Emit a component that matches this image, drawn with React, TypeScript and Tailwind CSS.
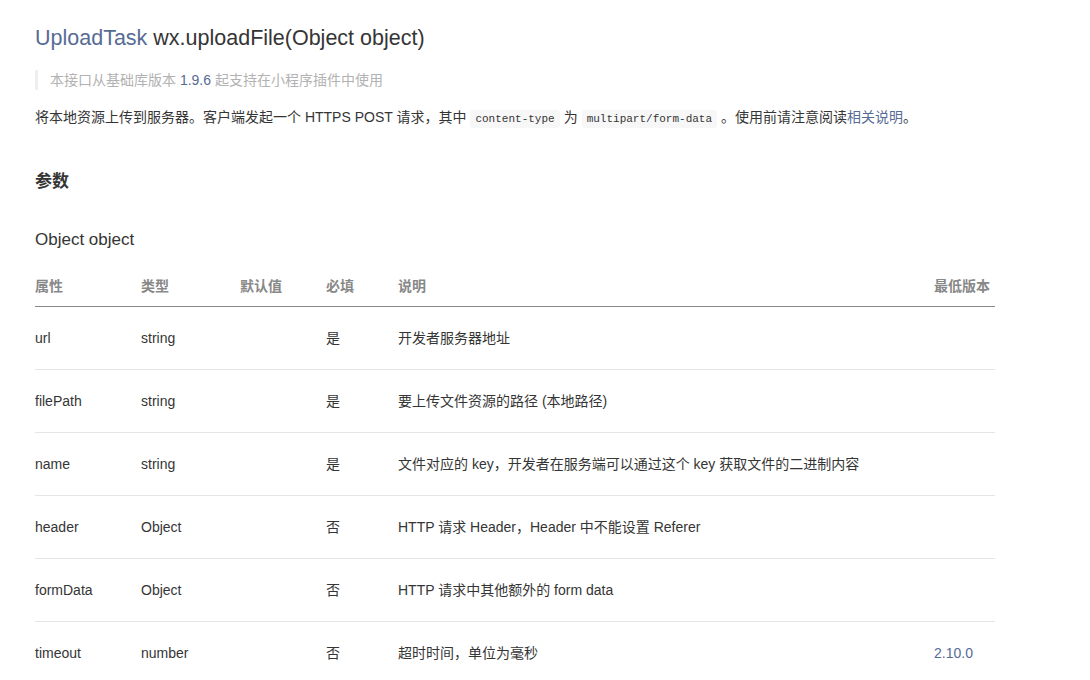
const rows = [
  { name: "url", type: "string", def: "", req: "是", desc: "开发者服务器地址", ver: "" },
  { name: "filePath", type: "string", def: "", req: "是", desc: "要上传文件资源的路径 (本地路径)", ver: "" },
  { name: "name", type: "string", def: "", req: "是", desc: "文件对应的 key，开发者在服务端可以通过这个 key 获取文件的二进制内容", ver: "" },
  { name: "header", type: "Object", def: "", req: "否", desc: "HTTP 请求 Header，Header 中不能设置 Referer", ver: "" },
  { name: "formData", type: "Object", def: "", req: "否", desc: "HTTP 请求中其他额外的 form data", ver: "" },
  { name: "timeout", type: "number", def: "", req: "否", desc: "超时时间，单位为毫秒", ver: "2.10.0" },
];

const cols = "grid grid-cols-[106px_99px_86px_72px_536px_61px]";

function Code({ children }: { children: string }) {
  return (
    <code className="mx-[4px] rounded-[3px] bg-[#f7f7f7] px-[5px] py-[3px] font-['Liberation_Mono',monospace] text-[11px] text-[#353535]">
      {children}
    </code>
  );
}

export default function App() {
  return (
    <div className="min-h-[680px] bg-white px-[35px] pt-[24px] font-['Liberation_Sans','Noto_Sans_CJK_SC',sans-serif] text-[#353535]">
      <h1 className="text-[21.5px] leading-[28px] font-normal">
        <span className="text-[#576b95]">UploadTask</span> wx.uploadFile(Object object)
      </h1>

      <div className="mt-[18px] border-l-[3px] border-[#eeeeee] pl-[12px] text-[14px] leading-[20px] text-[#b2b2b2]">
        本接口从基础库版本 <span className="text-[#576b95]">1.9.6</span> 起支持在小程序插件中使用
      </div>

      <p className="mt-[16px] text-[14px] leading-[22px]">
        将本地资源上传到服务器。客户端发起一个 HTTPS POST 请求，其中<Code>content-type</Code>为<Code>multipart/form-data</Code>。使用前请注意阅读<span className="text-[#576b95]">相关说明</span>。
      </p>

      <h2 className="mt-[40px] text-[17px] leading-[24px] font-bold">参数</h2>

      <h3 className="mt-[35px] text-[17px] leading-[22px] font-normal">Object object</h3>

      <div className="mt-[14px] w-[960px] text-[14px]">
        <div className={`${cols} h-[42px] items-center border-b border-[#888888] pt-[2px] font-bold text-[#888888]`}>
          <div>属性</div>
          <div>类型</div>
          <div>默认值</div>
          <div>必填</div>
          <div>说明</div>
          <div>最低版本</div>
        </div>
        {rows.map((r) => (
          <div key={r.name} className={`${cols} h-[63px] items-center border-b border-[#e5e5e5]`}>
            <div>{r.name}</div>
            <div>{r.type}</div>
            <div>{r.def}</div>
            <div>{r.req}</div>
            <div>{r.desc}</div>
            <div className="text-[#576b95]">{r.ver}</div>
          </div>
        ))}
      </div>
    </div>
  );
}
